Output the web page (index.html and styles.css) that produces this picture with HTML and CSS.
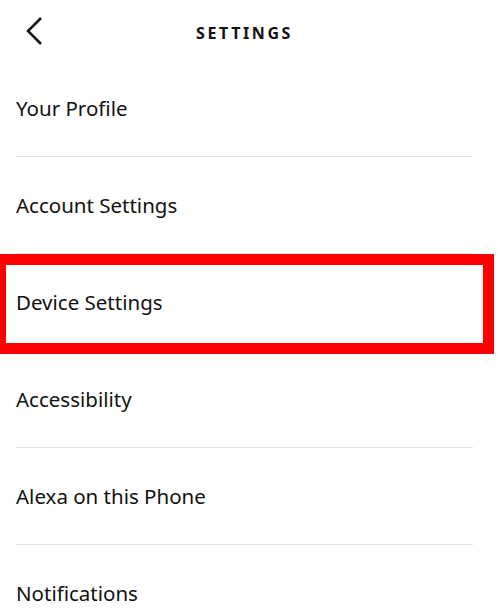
FILE: index.html
```html
<!DOCTYPE html>
<html lang="en">

<head>
    <meta charset="UTF-8">
    <meta name="viewport" content="width=device-width, initial-scale=1.0">
    <title>Settings</title>
    <link rel="stylesheet" href="styles.css">
</head>

<body>
    <div class="header">
        <a class="back" href="#">
            <svg width="20" height="30" viewBox="0 0 20 30">
                <path d="M16 2 L3 15 L16 28" fill="none" stroke="#111" stroke-width="2.5" />
            </svg>
        </a>
        <h1>SETTINGS</h1>
    </div>

    <ul class="menu">
        <li>Your Profile</li>
        <li>Account Settings</li>
        <li class="selected">Device Settings<span class="highlight"></span></li>
        <li>Accessibility</li>
        <li>Alexa on this Phone</li>
        <li>Notifications</li>
    </ul>
</body>

</html>
```

FILE: styles.css
```css
body {
    font-family: "Noto Sans", "Open Sans", sans-serif;
    background-color: #fff;
    color: #111;
    margin: 0;
    padding: 0;
    overflow: hidden;
}

.header {
    position: relative;
    height: 60px;
    display: flex;
    align-items: center;
    justify-content: center;
}

.back {
    position: absolute;
    left: 25px;
    top: 16px;
}

h1 {
    margin: 0;
    font-size: 16px;
    font-weight: 700;
    letter-spacing: 2.6px;
    margin-left: -10px;
    margin-top: 5px;
}

.menu {
    list-style: none;
    margin: 0;
    padding: 0 26px 0 16px;
}

.menu li {
    position: relative;
    height: 96px;
    display: flex;
    align-items: center;
    font-size: 20.5px;
    border-bottom: 1px solid #e4e4e4;
}

.highlight {
    position: absolute;
    left: -16px;
    top: 0;
    width: 494px;
    height: 100px;
    box-sizing: border-box;
    border: 11px solid #ff0000;
    border-left-width: 6px;
}
```
